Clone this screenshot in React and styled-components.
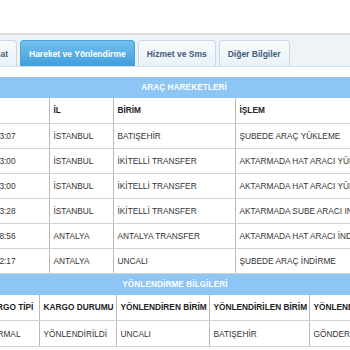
import React from "react";
import styled, { createGlobalStyle, css } from "styled-components";

const GlobalStyle = createGlobalStyle`
  html, body { margin: 0; padding: 0; background: #ffffff; overflow: hidden; }
  body { font-family: "Liberation Sans", Arial, sans-serif; }
`;

const Page = styled.div`
  width: 350px;
  height: 350px;
  overflow: hidden;
  padding-top: 33px;
  box-sizing: border-box;
`;

const TabBar = styled.div`
  border-top: 2px solid #dcdcdc;
  background: #eef3f8;
  height: 31px;
  border-bottom: 1px solid #d3deea;
  display: flex;
  align-items: flex-end;
`;

const TabStrip = styled.div`
  display: flex;
  align-items: flex-end;
  gap: 3px;
  margin-left: -63px;
`;

const Tab = styled.div`
  height: 26px;
  box-sizing: border-box;
  padding: 0 8px;
  display: flex;
  align-items: center;
  justify-content: ${(p) => (p.$right ? "flex-end" : "center")};
  width: ${(p) => (p.$w ? `${p.$w}px` : "auto")};
  font-size: 8.5px;
  font-weight: bold;
  white-space: nowrap;
  border-radius: 4px 4px 0 0;
  border: 1px solid #c9d8e6;
  border-bottom: none;
  color: #3f5d7d;
  background: linear-gradient(#f8fbfd, #e9f1f8);
  ${(p) =>
    p.$active &&
    css`
      color: #ffffff;
      border-color: #4aa2dc;
      background: linear-gradient(#74c0ee, #3f9edc);
    `}
`;

const Section = styled.div`
  margin-top: ${(p) => p.$top || 0}px;
  margin-left: ${(p) => p.$left}px;
  width: ${(p) => p.$width}px;
`;

const Bar = styled.div`
  height: 21px;
  background: #8dc5f5;
  color: #ffffff;
  font-size: 8.2px;
  font-weight: bold;
  display: flex;
  align-items: center;
  justify-content: center;
  letter-spacing: 0.1px;
`;

const Table = styled.table`
  width: 100%;
  table-layout: fixed;
  border-collapse: collapse;
  font-size: 8.3px;
  color: #333333;
`;

const Row = styled.tr`
  height: ${(p) => p.$h}px;
`;

const Cell = styled.td`
  border-left: 1px solid #b8b8b8;
  border-bottom: 1px solid #d2d2d2;
  padding: 0 4px;
  white-space: nowrap;
  overflow: visible;
  text-align: left;
  vertical-align: middle;
  &:first-child { border-left: none; }
`;

const HeadCell = styled(Cell).attrs({ as: "th" })`
  font-weight: bold;
  color: #222222;
`;

const moves = [
  ["12.03.2019 13:07", "İSTANBUL", "BATIŞEHİR", "ŞUBEDE ARAÇ YÜKLEME"],
  ["12.03.2019 23:00", "İSTANBUL", "İKİTELLİ TRANSFER", "AKTARMADA HAT ARACI YÜKLEME"],
  ["12.03.2019 23:00", "İSTANBUL", "İKİTELLİ TRANSFER", "AKTARMADA HAT ARACI YÜKLEME"],
  ["12.03.2019 23:28", "İSTANBUL", "İKİTELLİ TRANSFER", "AKTARMADA SUBE ARACI INDIRME"],
  ["13.03.2019 08:56", "ANTALYA", "ANTALYA TRANSFER", "AKTARMADA HAT ARACI İNDİRME"],
  ["13.03.2019 12:17", "ANTALYA", "UNCALI", "ŞUBEDE ARAÇ İNDİRME"],
];

export default function App() {
  return (
    <Page>
      <GlobalStyle />
      <TabBar>
        <TabStrip>
          <Tab $w={80} $right>Genel Malumat</Tab>
          <Tab $active>Hareket ve Yönlendirme</Tab>
          <Tab>Hizmet ve Sms</Tab>
          <Tab>Diğer Bilgiler</Tab>
        </TabStrip>
      </TabBar>

      <Section $top={10} $left={-53} $width={474}>
        <Bar>ARAÇ HAREKETLERİ</Bar>
        <Table>
          <colgroup>
            <col style={{ width: 102 }} />
            <col style={{ width: 64 }} />
            <col style={{ width: 122 }} />
            <col />
          </colgroup>
          <tbody>
            <Row $h={25}>
              <HeadCell>TARİH</HeadCell>
              <HeadCell>İL</HeadCell>
              <HeadCell>BİRİM</HeadCell>
              <HeadCell>İŞLEM</HeadCell>
            </Row>
            {moves.map((m, i) => (
              <Row key={i} $h={25}>
                {m.map((c, j) => (
                  <Cell key={j}>{c}</Cell>
                ))}
              </Row>
            ))}
          </tbody>
        </Table>
      </Section>

      <Section $left={-19} $width={388}>
        <Bar>YÖNLENDİRME BİLGİLERİ</Bar>
        <Table>
          <colgroup>
            <col style={{ width: 58 }} />
            <col style={{ width: 77 }} />
            <col style={{ width: 93 }} />
            <col style={{ width: 100 }} />
            <col />
          </colgroup>
          <tbody>
            <Row $h={26}>
              <HeadCell>KARGO TİPİ</HeadCell>
              <HeadCell>KARGO DURUMU</HeadCell>
              <HeadCell>YÖNLENDİREN BİRİM</HeadCell>
              <HeadCell>YÖNLENDİRİLEN BİRİM</HeadCell>
              <HeadCell>YÖNLENDİRME NEDENİ</HeadCell>
            </Row>
            <Row $h={26}>
              <Cell>NORMAL</Cell>
              <Cell>YÖNLENDİRİLDİ</Cell>
              <Cell>UNCALI</Cell>
              <Cell>BATIŞEHİR</Cell>
              <Cell>GÖNDERİCİ TALEBİ</Cell>
            </Row>
          </tbody>
        </Table>
      </Section>
    </Page>
  );
}
